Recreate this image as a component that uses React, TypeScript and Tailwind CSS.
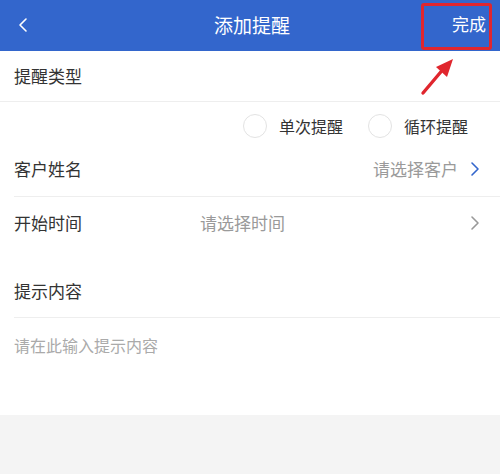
import React, { useState } from "react";

const font = { fontFamily: '"Noto Sans CJK SC", "Noto Sans", sans-serif' };

function Chevron({ color, left }: { color: string; left?: boolean }) {
  return (
    <svg width="10" height="16" viewBox="0 0 10 16" fill="none">
      <path
        d={left ? "M8 2 L2 8 L8 14" : "M2 2 L8 8 L2 14"}
        stroke={color}
        strokeWidth="1.6"
        strokeLinecap="round"
        strokeLinejoin="round"
      />
    </svg>
  );
}

function Radio({ label, checked, onClick }: { label: string; checked: boolean; onClick: () => void }) {
  return (
    <button onClick={onClick} className="flex items-center gap-[12px] text-[16px] text-[#333]">
      <span
        className={`w-[24px] h-[24px] rounded-full border ${
          checked ? "border-[#3366cc] bg-[#3366cc]" : "border-[#e3e3e3] bg-white"
        }`}
      />
      {label}
    </button>
  );
}

export default function App() {
  const [type, setType] = useState("");
  const [note, setNote] = useState("");

  return (
    <div className="w-[500px] h-[474px] bg-[#f4f4f4] relative overflow-hidden" style={font}>
      {/* header */}
      <div className="h-[51px] bg-[#3366cc] flex items-center justify-between pl-[18px] pr-[14px] text-white">
        <span className="w-[60px] -mt-[2px]">
          <Chevron color="#ffffff" left />
        </span>
        <span className="text-[19px] leading-none -mt-[2px]">添加提醒</span>
        <span className="w-[60px] text-right text-[17px] leading-none -mt-[4px]">完成</span>
      </div>

      {/* highlight box + arrow */}
      <div className="absolute left-[421px] top-[3px] w-[71px] h-[47px] border-[3px] border-[#e0262e] rounded-[3px]" />
      <svg className="absolute left-[415px] top-[55px]" width="45" height="45" viewBox="0 0 45 45">
        <line x1="8" y1="38" x2="30" y2="12" stroke="#e0262e" strokeWidth="3.4" strokeLinecap="round" />
        <polygon points="38,4 21,12 32,22" fill="#e0262e" />
      </svg>

      <div className="bg-white">
        <div className="h-[51px] flex items-center px-[14px] text-[17px] text-[#333] border-b border-[#eeeeee]">
          提醒类型
        </div>

        <div className="h-[45px] flex items-center justify-end gap-[25px] pr-[32px] pt-[2px]">
          <Radio label="单次提醒" checked={type === "once"} onClick={() => setType("once")} />
          <Radio label="循环提醒" checked={type === "loop"} onClick={() => setType("loop")} />
        </div>

        <div className="ml-[14px] h-[50px] flex items-center pr-[20px] pb-[5px] border-b border-[#eeeeee]">
          <span className="text-[17px] text-[#333]">客户姓名</span>
          <span className="ml-auto text-[17px] text-[#9a9a9a]">请选择客户</span>
          <span className="ml-[12px]">
            <Chevron color="#3366cc" />
          </span>
        </div>

        <div className="h-[52px] flex items-center pl-[14px] pr-[20px]">
          <span className="w-[186px] text-[17px] text-[#333]">开始时间</span>
          <span className="text-[17px] text-[#9a9a9a]">请选择时间</span>
          <span className="ml-auto">
            <Chevron color="#999999" />
          </span>
        </div>

        <div className="mt-[16px] ml-[14px] h-[53px] flex items-center text-[17px] text-[#333] border-b border-[#eeeeee]">
          提示内容
        </div>

        <textarea
          value={note}
          onChange={(e) => setNote(e.target.value)}
          placeholder="请在此输入提示内容"
          className="block w-full h-[97px] resize-none px-[14px] pt-[15px] text-[16px] text-[#333] placeholder:text-[#aaaaaa] outline-none bg-white"
          style={font}
        />
      </div>
    </div>
  );
}
